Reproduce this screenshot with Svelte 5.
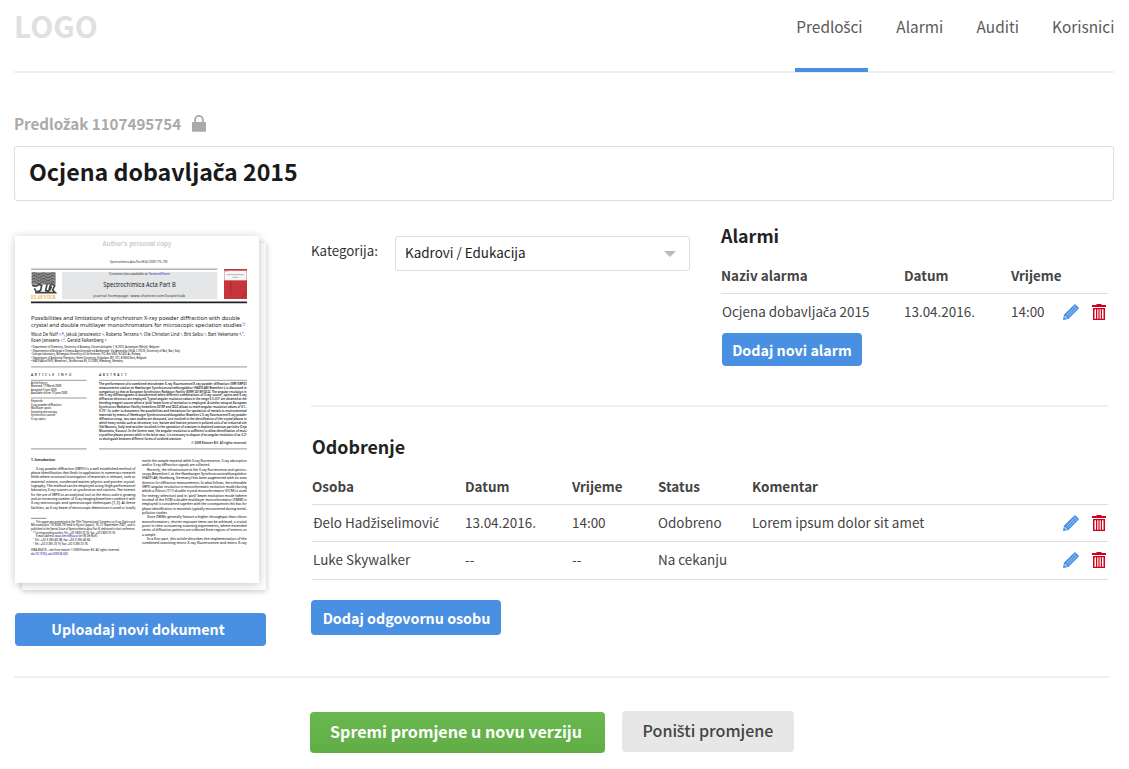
<script>
  const nav = ['Predlošci', 'Alarmi', 'Auditi', 'Korisnici'];
  const approvals = [
    { name: 'Đelo Hadžiselimović', date: '13.04.2016.', time: '14:00', status: 'Odobreno', note: 'Lorem ipsum dolor sit amet' },
    { name: 'Luke Skywalker', date: '--', time: '--', status: 'Na cekanju', note: '' }
  ];

  // Letters with a caron or acute are set in a companion face.
  const parts = (s) => s.split(/([čćšž])/).filter((p) => p !== '');
  const accented = (p) => /^[čćšž]$/.test(p);

  // Preview lines: [x, baseline, width, text]
  const affiliations = [
    [78, 369, 384, 'ᵃ Department of Chemistry, University of Antwerp, Universiteitsplein 1, B-2610, Antwerpen (Wilrijk), Belgium'],
    [78, 380, 447, 'ᵇ Dipartimento di Biologia e Chimica Agroforestale ed Ambientale, Via Amendola 165/A, I-70126, University of Bari, Bari, Italy'],
    [78, 391, 329, 'ᶜ Isotope Laboratory, Norwegian University of Life Sciences, P.O. Box 5003, N-1432 Ås, Norway'],
    [78, 401, 346, 'ᵈ Department of Analytical Chemistry, Ghent University, Krijgslaan 281, S12, B-9000 Gent, Belgium'],
    [78, 411, 276, 'ᵉ HASYLAB at DESY, Beamline L, Notkestraat 85, D-22603, Hamburg, Germany']
  ];
  const info = [
    [477, 50, 'Article history:'], [487, 91, 'Received 17 March 2009'], [497, 76, 'Accepted 5 June 2009'], [507, 109, 'Available online 13 June 2009'],
    [531, 36, 'Keywords:'], [542, 91, 'X-ray powder diffraction'], [553, 61, 'Multilayer optics'], [563, 78, 'Scanning microscopy'],
    [574, 73, 'Synchrotron sources'], [584, 44, 'X-ray optics']
  ];
  const abstract = [
    'The performance of a combined microbeam X-ray fluorescence/X-ray powder diffraction (XRF/XRPD)',
    'measurement station at Hamburger Synchrotronstrahlungslabor (HASYLAB) Beamline L is discussed in',
    'comparison to that at European Synchrotron Radiation Facility (ESRF) ID18F/ID22. The angular resolution in',
    'the X-ray diffractograms is documented when different combinations of X-ray source, optics and X-ray',
    'diffraction detectors are employed. Typical angular resolution values in the range 0.3–0.5° are obtained at the',
    'bending magnet source when a ‘pink’ beam form of excitation is employed. A similar setup at European',
    'Synchrotron Radiation Facility beamlines ID18F and ID22 allows to reach angular resolution values of 0.1–',
    '0.15°. In order to document the possibilities and limitations for speciation of metals in environmental',
    'materials by means of Hamburger Synchrotronstrahlungslabor Beamline L X-ray fluorescence/X-ray powder',
    'diffraction setup, two case studies are discussed, one involved in the identification of the crystal phases in',
    'which heavy metals such as chromium, iron, barium and lead are present in polluted soils of an industrial site',
    '(Val Basento, Italy) and another involved in the speciation of uranium in depleted uranium particles (Ceja',
    'Mountains, Kosovo). In the former case, the angular resolution is sufficient to allow identification of most',
    'crystalline phases present while in the latter case, it is necessary to dispose of an angular resolution of ca. 0.2°',
    'to distinguish between different forms of oxidized uranium.'
  ];
  const leftColumn = [
    'X-ray powder diffraction (XRPD) is a well established method of',
    'phase identification that finds its application in numerous research',
    'fields where structural investigation of materials is relevant, such as',
    'material science, condensed matter physics and protein crystal-',
    'lography. The method can be employed using (high-performance)',
    'laboratory X-ray sources or at synchrotron end stations. The interest',
    'for the use of XRPD as an analytical tool on the micro-scale is growing',
    'and an increasing number of X-ray imaging beamlines combine it with',
    'X-ray microscopic and spectroscopic techniques [1,2]. At these',
    'facilities, an X-ray beam of microscopic dimensions is used to locally'
  ];
  // [indent, width (0 = full measure), text]
  const rightColumn = [
    [0, 0, 'excite the sample material while X-ray fluorescence, X-ray absorption'],
    [0, 204, 'and/or X-ray diffraction signals are collected.'],
    [15, 0, 'Recently, the infrastructure at the X-ray fluorescence and spectro-'],
    [0, 0, 'scopy Beamline L at the Hamburger Synchrotronstrahlungslabor'],
    [0, 0, '(HASYLAB; Hamburg, Germany) has been augmented with an area'],
    [0, 0, 'detector for diffraction measurements. In what follows, the achievable'],
    [0, 0, 'XRPD angular resolution in monochromatic excitation mode (during'],
    [0, 0, 'which a Silicon (111) double crystal monochromator (DCM) is used'],
    [0, 0, 'for energy selection) and in ‘pink’ beam excitation mode (where'],
    [0, 0, 'instead of the DCM a double multilayer monochromator (DMM) is'],
    [0, 0, 'employed) is considered together with the consequences this has for'],
    [0, 0, 'phase identification in materials typically encountered during metal-'],
    [0, 77, 'pollution studies.'],
    [15, 0, 'Since DMMs generally feature a higher throughput than silicon'],
    [0, 0, 'monochromators, shorter exposure times can be achieved, a crucial'],
    [0, 0, 'point in time consuming scanning experiments, where extended'],
    [0, 0, 'series of diffraction patterns are collected from regions of interest on'],
    [0, 42, 'a sample.'],
    [15, 0, 'In a first part, this article describes the implementation of the'],
    [0, 0, 'combined scanning micro X-ray fluorescence and micro X-ray']
  ];
  const footnotes = [
    [84, 893, 306, '☆ This paper was presented at the 19th “International Congress on X-ray Optics and'],
    [78, 904, 312, 'Microanalysis” (ICXOM-19) held in Kyoto (Japan), 16–21 September 2007, and is'],
    [78, 915, 312, 'published in the Special Issue of Spectrochimica Acta Part B, dedicated to that conference.'],
    [84, 926, 248, '* Corresponding author. Tel.: +32 3 820 23 76; fax: +32 3 820 23 76.'],
    [84, 948, 174, '¹ Tel.: +32 3 265 40 38; fax: +32 3 265 40 60.'],
    [84, 959, 166, '² Tel.: +32 3 265 23 73; fax: +32 3 265 23 76.'],
    [78, 979, 266, '0584-8547/$ – see front matter © 2009 Elsevier B.V. All rights reserved.']
  ];
</script>

{#snippet t(s)}{#each parts(s) as p}{#if accented(p)}<span class="acc">{p}</span>{:else}{p}{/if}{/each}{/snippet}

{#snippet actions()}
  <span class="actions">
    <svg class="pencil" width="16" height="16" viewBox="0 0 16 16" aria-hidden="true">
      <path fill="#4a90e2" d="M.2 15.8 1.1 10.600 11.300.4Q11.900 0 12.400.4L15.600 3.600Q16 4.200 15.600 4.700L5.400 14.900Z" />
      <path stroke="#fff" stroke-width=".7" fill="none" d="M3.600 11.200 11.100 3.700M5 12.600 12.500 5.100M10.600 1.900 14.100 5.400" opacity=".7" />
      <path fill="#fff" d="m1.700 11.600 2.700 2.700-1.800.4-1.300-1.300Z" opacity=".6" />
      <path fill="#4a90e2" d="m.2 15.800.5-3 2.500 2.500Z" />
    </svg>
    <svg class="trash" width="14" height="16" viewBox="0 0 14 16" aria-hidden="true">
      <path fill="#d0021b" fill-rule="evenodd" d="M4.500 0h5v1H14v2H0V1h4.500ZM1 4h12v12H1Zm1.500 1.200v9.500h1.500V5.200Zm2.700 0v9.500h1.200V5.200Zm2.400 0v9.500h1.200V5.200Zm2.400 0v9.500h1.500V5.200Z" />
    </svg>
  </span>
{/snippet}

<div class="page">
  <header>
    <div class="logo">LOGO</div>
    <nav>
      {#each nav as item, i}
        <a href="#top" class:active={i === 0}>{@render t(item)}</a>
      {/each}
    </nav>
  </header>

  <div class="ident">
    <span>{@render t('Predložak 1107495754')}</span>
    <svg width="14" height="17" viewBox="0 0 14 17" aria-hidden="true">
      <rect y="7" width="14" height="9.700" rx=".8" fill="#aaa" />
      <path d="M3.200 7.500V4.700a3.800 3.800 0 0 1 7.600 0v2.800" fill="none" stroke="#aaa" stroke-width="1.900" />
    </svg>
  </div>
  <h1>{@render t('Ocjena dobavljača 2015')}</h1>

  <main>
    <aside>
      <div class="stack">
        <div class="sheet">
          <svg width="244" height="347" viewBox="30 33 732 1041" font-family="'Noto Sans', sans-serif" fill="#222">
            <text x="292" y="62" textLength="207" font-size="19" font-weight="700" font-family="'Liberation Sans', sans-serif" fill="#ccc">Author's personal copy</text>
            <text x="315" y="115" textLength="172" font-size="9" lengthAdjust="spacingAndGlyphs">Spectrochimica Acta Part B 64 (2009) 775–793</text>
            <path d="M78 132.500H637" stroke="#555" stroke-width="2" />
            <rect x="171" y="141" width="466" height="82" fill="#e4e6e8" />
            <rect x="80" y="142" width="72" height="37" fill="#888" />
            <path d="M80 146q8-5 14 0t14 0 14 0 14 0 14 0M80 155q8-7 14 0t14 0 14 0 14 0 14 0M80 164q8-7 14 0t14 0 14 0 14 0 14 0M80 173q8-7 14 0t14 0 14 0 14 0 14 0" fill="none" stroke="#444" stroke-width="3" stroke-dasharray="5 2" />
            <path d="M82 180q10 8 20-2l8 4-3 14-16 7h60l-8-8 6-13-8-5-6 6-4 16-9-3 4-18M88 190l6 10M140 184l-6 12" fill="none" stroke="#444" stroke-width="5" />
            <text x="78" y="223" textLength="74" font-size="18" lengthAdjust="spacingAndGlyphs" font-family="'Liberation Serif', serif" font-weight="700" fill="#f3b04c">ELSEVIER</text>
            <text x="312" y="151" textLength="116" font-size="10.500" lengthAdjust="spacingAndGlyphs">Contents lists available at</text>
            <text x="432" y="151" textLength="62" font-size="10.500" lengthAdjust="spacingAndGlyphs" fill="#22a">ScienceDirect</text>
            <text x="295" y="186" textLength="217" font-size="19.500" lengthAdjust="spacingAndGlyphs">Spectrochimica Acta Part B</text>
            <text x="265" y="215" textLength="275" font-size="11">journal homepage: www.elsevier.com/locate/sab</text>
            <rect x="657" y="132" width="69" height="90" fill="#c8343c" />
            <rect x="658" y="137" width="67" height="29" fill="#f7f5f5" />
            <path d="M661 139h8M665 149h52M683 157h17" stroke="#999" stroke-width="2" />
            <path d="M677 168v40M708 220l16-16" stroke="#8b2630" stroke-width="2" />
            <path d="M78 232H726" stroke="#222" stroke-width="5" />
            <g font-size="18">
              <text x="78" y="284" textLength="627" lengthAdjust="spacingAndGlyphs">Possibilities and limitations of synchrotron X-ray powder diffraction with double</text>
              <text x="78" y="306" textLength="632" lengthAdjust="spacingAndGlyphs">crystal and double multilayer monochromators for microscopic speciation studies</text>
              <text x="709" y="302" font-size="17" fill="#44b">☆</text>
            </g>
            <g font-size="14" fill="#222">
              <text x="78" y="334" textLength="641" lengthAdjust="spacingAndGlyphs">Wout De Nolf <tspan fill="#22c">ᵃ,*</tspan>, Jakub Jaroszewicz <tspan fill="#22c">ᵃ</tspan>, Roberto Terzano <tspan fill="#22c">ᵇ</tspan>, Ole Christian Lind <tspan fill="#22c">ᶜ</tspan>, Brit Salbu <tspan fill="#22c">ᶜ</tspan>, Bart Vekemans <tspan fill="#22c">ᵈ,¹</tspan>,</text>
              <text x="78" y="350" textLength="226" lengthAdjust="spacingAndGlyphs">Koen Janssens <tspan fill="#22c">ᵃ,²</tspan>, Gerald Falkenberg <tspan fill="#22c">ᵉ</tspan></text>
            </g>
            <g font-size="9.200" font-weight="500">
              {#each affiliations as [x, y, w, s]}
                <text {x} {y} textLength={w} lengthAdjust="spacingAndGlyphs">{s}</text>
              {/each}
            </g>
            <path d="M78 425.500H726M78 671.500H245M282 671.500H726" stroke="#aaa" stroke-width="4" />
            <g font-size="10" font-weight="500">
              <text x="78" y="454" textLength="121">ARTICLE INFO</text>
              <text x="282" y="454" textLength="83">ABSTRACT</text>
            </g>
            <path d="M78 466H245M282 466H726M78 519H245" stroke="#888" stroke-width="2.500" />
            <g font-size="9.500" font-weight="500">
              {#each info as [y, w, s]}
                <text x="78" {y} textLength={w} lengthAdjust="spacingAndGlyphs">{s}</text>
              {/each}
            </g>
            <g font-size="11.200" font-weight="600">
              {#each abstract as s, i}
                <text x="282" y={479 + i * 11.8} textLength={i === 14 ? 248 : 443} lengthAdjust="spacingAndGlyphs">{s}</text>
              {/each}
              <text x="559" y="656" textLength="166" lengthAdjust="spacingAndGlyphs">© 2009 Elsevier B.V. All rights reserved.</text>
            </g>
            <text x="78" y="708" textLength="72" font-size="11" font-weight="700" lengthAdjust="spacingAndGlyphs">1. Introduction</text>
            <g font-size="12" font-weight="500">
              {#each leftColumn as s, i}
                <text x={i ? 78 : 93} y={734 + i * 13} textLength={i ? 313 : 298} lengthAdjust="spacingAndGlyphs">{s}</text>
              {/each}
              {#each rightColumn as [dx, w, s], i}
                <text x={411 + dx} y={711 + i * 13} textLength={w || 314 - dx} lengthAdjust="spacingAndGlyphs">{s}</text>
              {/each}
            </g>
            <path d="M78 880H124" stroke="#555" stroke-width="2" />
            <g font-size="9.500" font-weight="500">
              {#each footnotes as [x, y, w, s]}
                <text {x} {y} textLength={w} lengthAdjust="spacingAndGlyphs">{s}</text>
              {/each}
              <text x="93" y="937" textLength="185" lengthAdjust="spacingAndGlyphs">E-mail address: <tspan fill="#22a">wout.denolf@ua.ac.be</tspan> (W. De Nolf).</text>
              <text x="78" y="990" textLength="110" lengthAdjust="spacingAndGlyphs">doi:<tspan fill="#22a">10.1016/j.sab.2009.06.003</tspan></text>
            </g>
          </svg>
        </div>
      </div>
      <button class="btn upload">Uploadaj novi dokument</button>
    </aside>

    <div class="details">
      <div class="top">
        <div class="category">
          <span class="label">Kategorija:</span>
          <div class="select">
            <span>Kadrovi / Edukacija</span>
            <svg width="12" height="6" viewBox="0 0 12 6" aria-hidden="true"><path d="M0 0h12L6 6Z" fill="#bbb" /></svg>
          </div>
        </div>

        <section class="alarms">
          <h2>Alarmi</h2>
          <div class="row head"><span>Naziv alarma</span><span>Datum</span><span>Vrijeme</span></div>
          <div class="row item"><span>{@render t('Ocjena dobavljača 2015')}</span><span>13.04.2016.</span><span>14:00</span>{@render actions()}</div>
          <button class="btn add-alarm">Dodaj novi alarm</button>
        </section>
      </div>

      <section class="approvals">
        <h2>Odobrenje</h2>
        <div class="row head"><span>Osoba</span><span>Datum</span><span>Vrijeme</span><span>Status</span><span>Komentar</span></div>
        {#each approvals as a}
          <div class="row item">
            <span>{@render t(a.name)}</span><span>{a.date}</span><span>{a.time}</span><span>{a.status}</span><span>{a.note}</span>{@render actions()}
          </div>
        {/each}
        <button class="btn add-person">Dodaj odgovornu osobu</button>
      </section>
    </div>
  </main>

  <footer>
    <button class="btn save">Spremi promjene u novu verziju</button>
    <button class="btn cancel">{@render t('Poništi promjene')}</button>
  </footer>
</div>

<style>
  :global(body) { margin: 0; background: #fff; }
  * { box-sizing: border-box; }
  .page {
    height: 769px; overflow: hidden; padding: 0 15px 0 14px; color: #444;
    font-family: 'Noto Sans CJK SC', 'Noto Sans', sans-serif; font-size: 13.45px;
  }
  .page span, .page a, .page button { white-space: nowrap; }
  .page .acc { font-family: 'Noto Sans', sans-serif; line-height: 0; margin: 0 -.02em; padding: 0; }
  .page svg { display: block; }

  header { height: 73px; display: flex; justify-content: space-between; border-bottom: 2px solid #efefef; }
  .logo { font-size: 30px; font-weight: 700; line-height: 50px; color: #e0e0e0; }
  nav { display: grid; grid-template-columns: 100px 80.3px 75.500px 61.900px; }
  nav a { font-size: 15.4px; line-height: 52.500px; color: #5a5a5a; text-decoration: none; position: relative; }
  nav a.active::after { content: ''; position: absolute; left: -1px; bottom: -1px; width: 72.500px; height: 4px; background: #4a90e2; }

  .ident { display: flex; align-items: flex-start; gap: 10.500px; padding-top: 39px; height: 73px; line-height: 23px; font-size: 15.150px; font-weight: 700; color: #aaa; }
  .ident svg { margin-top: 3px; }
  h1 { margin: 0; height: 55px; padding: 0 14px; border: 1px solid #ddd; border-radius: 3px; font-size: 23.200px; line-height: 48px; color: #1a1a1a; }

  main { display: grid; grid-template-columns: 252px 797px; column-gap: 45px; padding: 35px 0 0; height: 475px; }
  aside { padding-left: 1px; }
  .stack { width: 251px; height: 354px; position: relative; }
  .stack::before { content: ''; position: absolute; inset: 7px 0 0 7px; box-shadow: 0 1px 6px rgba(0, 0, 0, .24); background: #fcfcfc; }
  .sheet { position: relative; width: 244px; height: 347px; background: #fff; box-shadow: 0 1px 8px rgba(0, 0, 0, .22); }

  .btn { display: block; border: 0; padding: 0; border-radius: 4px; background: #4a90e2; color: #fff; font-family: inherit; font-weight: 700; font-size: 14.300px; text-align: center; }
  .upload { width: 251px; height: 33px; margin-top: 23px; padding: 0 5px 2px 0; }

  .top { display: grid; grid-template-columns: 379px 387px; column-gap: 31px; width: 797px; height: 171px; border-bottom: 2px solid #efefef; }
  .category { display: flex; justify-content: space-between; align-items: flex-start; color: #333; }
  .label { line-height: 29.500px; font-size: 13.300px; }
  .select { width: 295px; height: 35px; border: 1px solid #ddd; border-radius: 3px; padding: 0 13px 0 9px; display: flex; justify-content: space-between; align-items: center; color: #222; line-height: 31px; }
  .select span { margin-top: -2px; }

  section { color: #444; }
  h2 { margin: 0; font-size: 17.850px; line-height: 24px; height: 24px; color: #222; }
  .row { display: grid; border-bottom: 1px solid #ddd; }
  .head { font-weight: 700; }
  .item > span:first-child { padding-left: 1px; }
  .actions { display: flex; gap: 13px; align-items: flex-start; }

  .alarms { margin-top: -13px; }
  .alarms .row { grid-template-columns: 183px 107px 52px 1fr; }
  .alarms .head { height: 47px; line-height: 56px; }
  .alarms .item { height: 38px; border-bottom: 0; line-height: 35px; }
  .alarms .actions { padding-top: 10px; }
  .add-alarm { width: 140px; height: 33px; padding-bottom: 1px; margin: 1px 0 0 1px; }

  .approvals { padding: 27px 0 0 1px; }
  .approvals .row { grid-template-columns: 153px 107px 86px 94px 311px 1fr; }
  .approvals .head { height: 47px; line-height: 57px; }
  .approvals .item { height: 37px; line-height: 35px; }
  .approvals .item + .item { height: 38px; }
  .approvals .actions { padding-top: 10px; }
  .add-person { width: 190px; height: 35px; padding: 0 0 1px 1px; margin: 20px 0 0 -1px; }

  footer { width: 1095px; border-top: 2px solid #efefef; padding: 33px 0 0 296px; display: flex; gap: 17px; align-items: flex-start; }
  footer .btn { height: 41px; font-size: 16.100px; padding-bottom: 3px; }
  footer .save { width: 295px; margin-top: 1px; background: linear-gradient(#69b74f, #61ae47); padding-right: 3px; }
  footer .cancel { width: 172px; background: #e7e7e7; color: #444; font-weight: 500; }
</style>
